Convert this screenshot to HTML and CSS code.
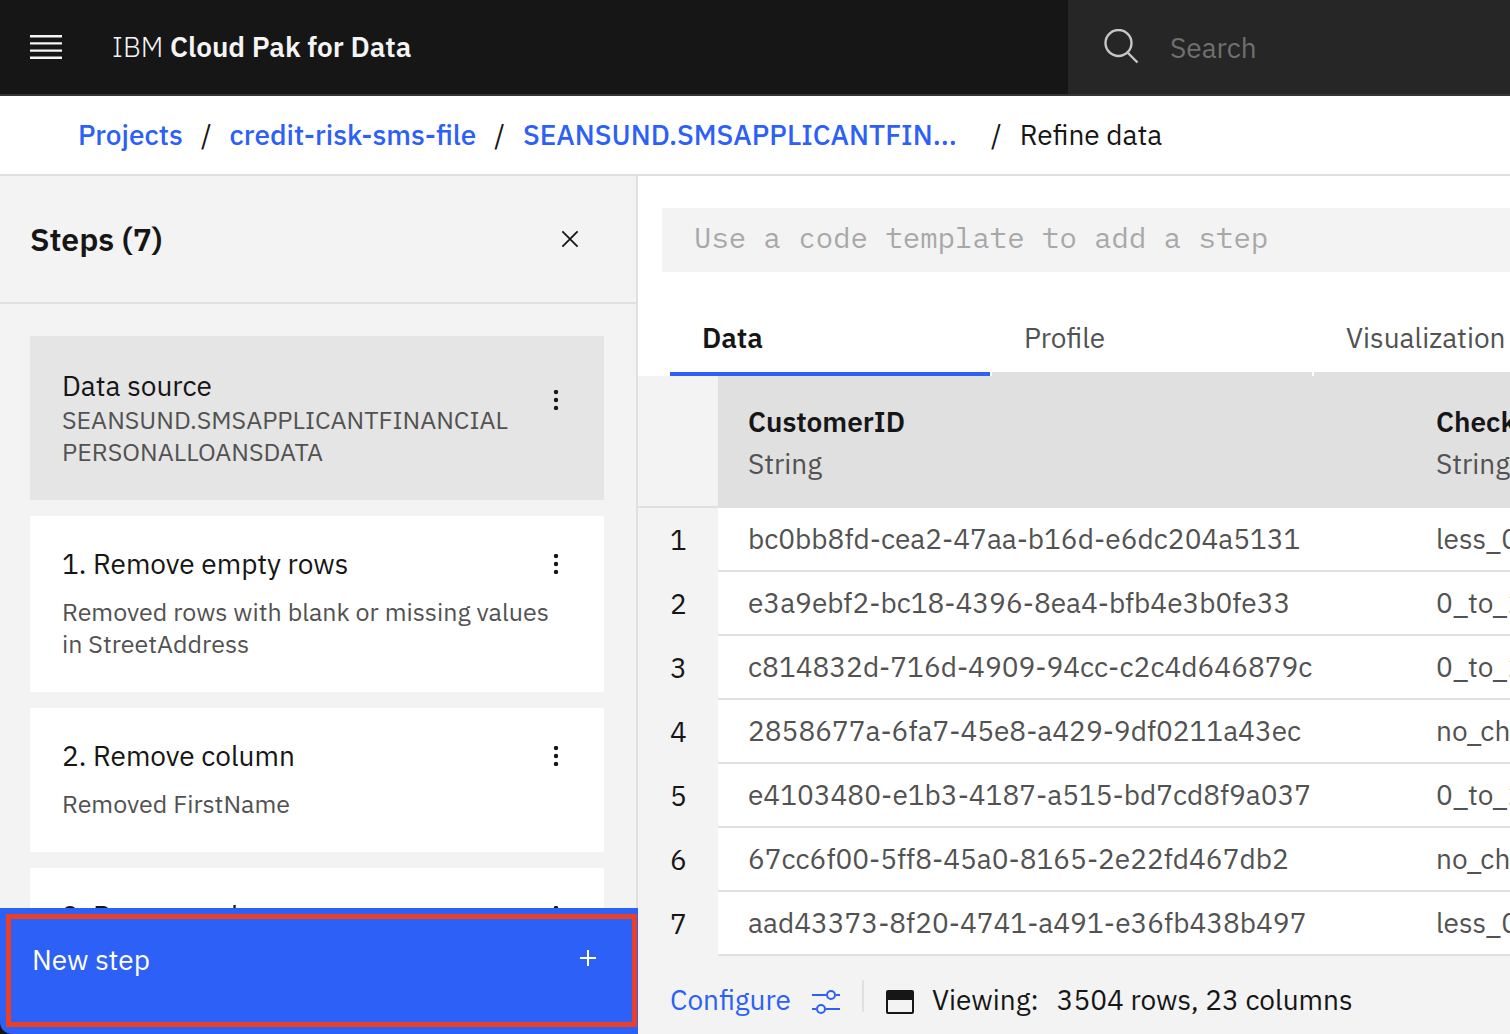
FILE: index.html
```html
<!DOCTYPE html>
<html lang="en">
<head>
<meta charset="utf-8">
<meta name="viewport" content="width=device-width, initial-scale=1">
<title>Refine data - IBM Cloud Pak for Data</title>
<link rel="stylesheet" href="styles.css">
</head>
<body>
<div class="app">
  <header class="topbar">
    <button class="icon-button menu-button" type="button" aria-label="Menu">
      <svg width="32" height="24" viewBox="0 0 32 24" fill="#f4f4f4"><path d="M0 0h32v2.4H0zM0 7.2h32v2.4H0zM0 14.4h32v2.4H0zM0 21.6h32V24H0z"/></svg>
    </button>
    <a class="brand" href="#">IBM <strong>Cloud Pak for Data</strong></a>
    <label class="search">
      <svg width="36" height="36" viewBox="0 0 36 36" fill="none" stroke="#c6c6c6" stroke-width="2.4"><circle cx="15.5" cy="14" r="13"/><path d="M24.5 23.5 34.5 33.5"/></svg>
      <input type="search" placeholder="Search" aria-label="Search">
    </label>
  </header>

  <nav class="breadcrumb" aria-label="Breadcrumb">
    <a href="#">Projects</a><span class="slash">/</span>
    <a href="#">credit-risk-sms-file</a><span class="slash">/</span>
    <a class="crumb-asset" href="#">SEANSUND.SMSAPPLICANTFIN...</a><span class="slash">/</span>
    <span>Refine data</span>
  </nav>

  <div class="workspace">
    <aside class="steps">
      <div class="steps-header">
        <h2>Steps (7)</h2>
        <button class="icon-button" type="button" aria-label="Close steps">
          <svg width="20" height="20" viewBox="0 0 20 20" stroke="#161616" stroke-width="1.8"><path d="M2.4 2.4l15.2 15.2M17.6 2.4 2.4 17.6"/></svg>
        </button>
      </div>
      <div class="steps-list">
        <article class="card source">
          <div class="card-body">
            <h3>Data source</h3>
            <p>SEANSUND.SMSAPPLICANTFINANCIAL<br>PERSONALLOANSDATA</p>
          </div>
          <button class="icon-button" type="button" aria-label="Data source options">
            <svg width="8" height="20" viewBox="0 0 8 20" fill="#161616"><circle cx="4" cy="2" r="2.2"/><circle cx="4" cy="10" r="2.2"/><circle cx="4" cy="18" r="2.2"/></svg>
          </button>
        </article>
        <article class="card">
          <div class="card-body">
            <h3>1. Remove empty rows</h3>
            <p>Removed rows with blank or missing values<br>in StreetAddress</p>
          </div>
          <button class="icon-button" type="button" aria-label="Step 1 options">
            <svg width="8" height="20" viewBox="0 0 8 20" fill="#161616"><circle cx="4" cy="2" r="2.2"/><circle cx="4" cy="10" r="2.2"/><circle cx="4" cy="18" r="2.2"/></svg>
          </button>
        </article>
        <article class="card">
          <div class="card-body">
            <h3>2. Remove column</h3>
            <p>Removed FirstName</p>
          </div>
          <button class="icon-button" type="button" aria-label="Step 2 options">
            <svg width="8" height="20" viewBox="0 0 8 20" fill="#161616"><circle cx="4" cy="2" r="2.2"/><circle cx="4" cy="10" r="2.2"/><circle cx="4" cy="18" r="2.2"/></svg>
          </button>
        </article>
        <article class="card">
          <div class="card-body">
            <h3>3. Remove column</h3>
          </div>
          <button class="icon-button" type="button" aria-label="Step 3 options">
            <svg width="8" height="20" viewBox="0 0 8 20" fill="#161616"><circle cx="4" cy="2" r="2.2"/><circle cx="4" cy="10" r="2.2"/><circle cx="4" cy="18" r="2.2"/></svg>
          </button>
        </article>
      </div>
      <div class="new-step-wrap">
        <button class="new-step" type="button">
          <span>New step</span>
          <svg width="16" height="16" viewBox="0 0 16 16" fill="#fff"><path d="M7 0h2v7h7v2H9v7H7V9H0V7h7z"/></svg>
        </button>
      </div>
    </aside>

    <main class="content">
      <input class="code-input" type="text" placeholder="Use a code template to add a step" aria-label="Code template">
      <div class="tabs" role="tablist">
        <button class="tab selected" type="button" role="tab" aria-selected="true">Data</button>
        <button class="tab" type="button" role="tab" aria-selected="false">Profile</button>
        <button class="tab" type="button" role="tab" aria-selected="false">Visualization</button>
      </div>
      <div class="table-wrap">
        <table>
          <colgroup><col class="col-number"><col class="col-data"><col class="col-data"></colgroup>
          <thead>
            <tr>
              <td class="corner"></td>
              <th scope="col">CustomerID<span class="type">String</span></th>
              <th scope="col">CheckingStatus<span class="type">String</span></th>
            </tr>
          </thead>
          <tbody>
            <tr><th scope="row">1</th><td>bc0bb8fd-cea2-47aa-b16d-e6dc204a5131</td><td>less_0</td></tr>
            <tr><th scope="row">2</th><td>e3a9ebf2-bc18-4396-8ea4-bfb4e3b0fe33</td><td>0_to_200</td></tr>
            <tr><th scope="row">3</th><td>c814832d-716d-4909-94cc-c2c4d646879c</td><td>0_to_200</td></tr>
            <tr><th scope="row">4</th><td>2858677a-6fa7-45e8-a429-9df0211a43ec</td><td>no_checking</td></tr>
            <tr><th scope="row">5</th><td>e4103480-e1b3-4187-a515-bd7cd8f9a037</td><td>0_to_200</td></tr>
            <tr><th scope="row">6</th><td>67cc6f00-5ff8-45a0-8165-2e22fd467db2</td><td>no_checking</td></tr>
            <tr><th scope="row">7</th><td>aad43373-8f20-4741-a491-e36fb438b497</td><td>less_0</td></tr>
          </tbody>
        </table>
      </div>
      <footer class="status">
        <a class="configure" href="#">Configure
          <svg width="28" height="24" viewBox="0 0 28 24" fill="none" stroke="#2c60f6" stroke-width="2"><path d="M0 5h14M24 5h4M0 19h4M14 19h14"/><circle cx="19" cy="5" r="4"/><circle cx="9" cy="19" r="4"/></svg>
        </a>
        <span class="divider"></span>
        <svg class="window-icon" width="28" height="24" viewBox="0 0 28 24"><rect x="1" y="1" width="26" height="22" rx="1" fill="none" stroke="#161616" stroke-width="2"/><path d="M1 1h26v9H1z" fill="#161616"/></svg>
        <span class="viewing">Viewing:</span>
        <span>3504 rows, 23 columns</span>
      </footer>
    </main>
  </div>
</div>
</body>
</html>
```
FILE: styles.css
```css
* { box-sizing: border-box; }

body {
  margin: 0;
  color: #161616;
  background: #fff;
  font-family: "IBM Plex Sans", "Noto Sans", sans-serif;
  font-size: 28px;
  line-height: 36px;
}

h2, h3, p { margin: 0; font-weight: 400; }
h3 { font-size: 28px; }
a { color: #2c60f6; text-decoration: none; }
button, input { font: inherit; border: 0; border-radius: 0; margin: 0; }
svg { display: block; flex: none; }

.app {
  display: flex;
  flex-direction: column;
  height: 100vh;
  overflow: hidden;
}

.icon-button { padding: 0; background: none; flex: none; }

/* Top bar */
.topbar {
  display: flex;
  flex: none;
  align-items: center;
  height: 96px;
  padding-left: 30px;
  background: #161616;
  border-bottom: 2px solid #393536;
}
.brand {
  flex: 1;
  margin-left: 50px;
  color: #f4f4f4;
  font-weight: 300;
  white-space: nowrap;
}
.brand strong { font-weight: 600; }
.search {
  display: flex;
  align-items: center;
  gap: 31px;
  width: 442px;
  height: 100%;
  padding-left: 35px;
  background: #262626;
}
.search input {
  flex: 1;
  min-width: 0;
  padding: 2px 0 0;
  color: #f4f4f4;
  background: none;
}
.search input::placeholder { color: #6f6f6f; opacity: 1; }

/* Breadcrumb */
.breadcrumb {
  display: flex;
  flex: none;
  align-items: center;
  gap: 18px;
  height: 80px;
  padding: 0 78px;
  border-bottom: 2px solid #e0e0e0;
  white-space: nowrap;
}
.breadcrumb a { font-weight: 500; }
.crumb-asset { width: 450px; }

.workspace { display: flex; flex: 1; min-height: 0; }

/* Steps panel */
.steps {
  display: flex;
  flex: none;
  flex-direction: column;
  width: 638px;
  background: #f3f3f3;
  border-right: 2px solid #e0e0e0;
}
.steps-header {
  display: flex;
  flex: none;
  align-items: center;
  justify-content: space-between;
  height: 128px;
  padding: 0 56px 0 30px;
  border-bottom: 2px solid #e0e0e0;
}
.steps-header h2 { font-size: 32px; font-weight: 600; line-height: 40px; }
.steps-list {
  display: flex;
  flex: 1;
  flex-direction: column;
  gap: 16px;
  min-height: 0;
  padding: 32px 32px 0 30px;
  overflow: hidden;
}
.card {
  display: flex;
  flex: none;
  align-items: flex-start;
  justify-content: space-between;
  padding: 30px 44px 32px 32px;
  background: #fff;
}
.card-body { width: 0; flex: 1; white-space: nowrap; }
.card p {
  margin-top: 14px;
  color: #525252;
  font-size: 25px;
  line-height: 32px;
}
.card .icon-button { margin-top: 8px; }
.card.source { padding: 32px 44px 32px 32px; background: #e5e5e5; }
.card.source p { margin-top: 0; }
.card.source .icon-button { margin-top: 22px; }

.new-step-wrap {
  position: relative;
  flex: none;
  height: 126px;
  margin-right: -2px;
  background: #161616;
}
.new-step-wrap::after {
  content: "";
  position: absolute;
  inset: 6px 1px 7px 6px;
  border: 5px solid #ea4025;
  pointer-events: none;
}
.new-step {
  display: flex;
  align-items: flex-start;
  justify-content: space-between;
  width: 100%;
  height: 100%;
  padding: 34px 42px 0 32px;
  color: #fff;
  background: #2c60f6;
  border-bottom-left-radius: 12px;
}
.new-step svg { margin-top: 8px; }

/* Content */
.content {
  display: flex;
  flex: 1;
  flex-direction: column;
  min-width: 0;
  overflow: hidden;
}
.code-input {
  flex: none;
  height: 64px;
  margin: 32px 0 28px 24px;
  padding: 0 32px 6px;
  background: #f3f3f3;
  font-family: "IBM Plex Mono", "Liberation Mono", monospace;
  font-size: 29px;
}
.code-input::placeholder { color: #a8a8a8; opacity: 1; }
.tabs { display: flex; flex: none; gap: 2px; padding-left: 32px; }
.tab {
  flex: none;
  width: 320px;
  height: 76px;
  padding: 4px 32px 0;
  color: #525252;
  background: none;
  border-bottom: 4px solid #e0e0e0;
  text-align: left;
}
.tab.selected { color: #161616; border-color: #2c60f6; font-weight: 600; }

.table-wrap { flex: none; overflow: hidden; }
table { width: 1456px; table-layout: fixed; border-collapse: separate; border-spacing: 0; }
.col-number { width: 80px; }
.col-data { width: 688px; }
th, td { padding: 0 30px; font-weight: 400; text-align: left; white-space: nowrap; }
thead tr { height: 132px; }
thead th { padding-top: 2px; background: #e0e0e0; font-weight: 600; line-height: 42px; }
.corner { background: #f3f3f3; border-bottom: 2px solid #e0e0e0; }
.type { display: block; color: #525252; font-weight: 400; }
tbody tr { height: 64px; }
tbody th { padding: 0 0 0 32px; background: #f3f3f3; }
tbody td { color: #525252; border-bottom: 2px solid #e0e0e0; }

/* Status bar */
.status {
  display: flex;
  flex: 1;
  align-items: flex-start;
  min-height: 78px;
  padding: 26px 32px 0;
  background: #f3f3f3;
  white-space: nowrap;
}
.configure { display: flex; gap: 21px; }
.configure svg, .window-icon { margin-top: 8px; }
.divider { width: 2px; height: 32px; margin: -2px 22px 0; background: #e0e0e0; }
.viewing { margin: 0 18px; }
```
